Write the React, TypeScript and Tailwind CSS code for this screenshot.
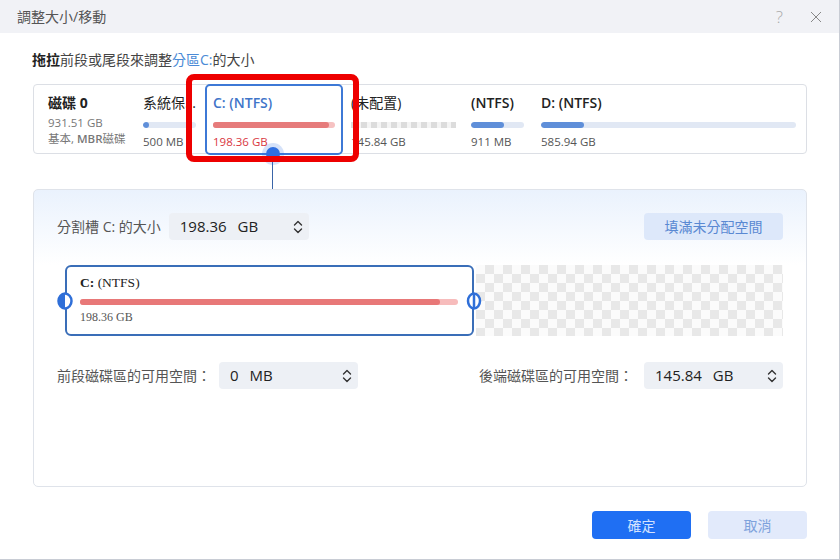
import React from "react"

const ui = "font-['Open_Sans','Noto_Sans_CJK_TC',sans-serif]"

const Chevrons = () => (
  <svg width="10" height="16" viewBox="0 0 10 16" fill="none" stroke="#333" strokeWidth="1.4" strokeLinecap="round" strokeLinejoin="round">
    <path d="M1.5 6 L5 2.5 L8.5 6" />
    <path d="M1.5 10 L5 13.5 L8.5 10" />
  </svg>
)

interface SpinProps {
  value: string
  unit: string
  width: string
}

const SpinBox = ({ value, unit, width }: SpinProps) => (
  <div className={`${width} h-[27px] rounded-[4px] bg-[#edf0f5] flex items-center pl-[11px] pr-[6px] text-[15px] text-[#222]`}>
    <span>{value}</span>
    <span className="ml-[11px]">{unit}</span>
    <span className="ml-auto flex items-center">
      <Chevrons />
    </span>
  </div>
)

interface PartProps {
  name: React.ReactNode
  size: string
  width: string
  fill: string
  bold?: boolean
}

const Part = ({ name, size, width, fill, bold }: PartProps) => (
  <div className={`${width} flex flex-col pt-[9px]`}>
    <div className={`text-[14px] leading-[18px] text-[#222] whitespace-nowrap ${bold ? "font-semibold" : ""}`}>{name}</div>
    <div className="mt-[10px] h-[6px] rounded-full bg-[#e1e8f4] overflow-hidden">
      <div className={`h-full rounded-full bg-[#5f8fd9] ${fill}`} />
    </div>
    <div className="mt-[7px] text-[11.5px] leading-[14px] text-[#555]">{size}</div>
  </div>
)

const LeftHandle = () => (
  <svg width="16" height="18" viewBox="0 0 16 18">
    <ellipse cx="8" cy="9" rx="6.5" ry="7.5" fill="#fff" stroke="#2f6fd8" strokeWidth="2.5" />
    <path d="M8 1.5 A6.5 7.5 0 0 0 8 16.5 Z" fill="#2f6fd8" />
    <path d="M8 5 L12 9 L8 13 Z" fill="#fff" />
  </svg>
)

const RightHandle = () => (
  <svg width="16" height="18" viewBox="0 0 16 18">
    <ellipse cx="8" cy="9" rx="6" ry="7.5" fill="#fff" stroke="#2f6fd8" strokeWidth="2.5" />
    <line x1="8" y1="1" x2="8" y2="17" stroke="#2f6fd8" strokeWidth="2.5" />
  </svg>
)

export default function App() {
  return (
    <div className={`w-[840px] h-[560px] bg-white flex flex-col border-r border-b border-[#c8ccd4] ${ui}`}>
      {/* title bar */}
      <div className="h-[33px] shrink-0 bg-[#f1f2f6] flex items-center pl-[17px] pr-[17px] text-[14px] text-[#555]">
        <span>調整大小/移動</span>
        <span className="ml-auto mr-[27px] text-[17px] text-[#aaa] font-light">?</span>
        <svg width="12" height="12" viewBox="0 0 12 12" stroke="#888" strokeWidth="1">
          <path d="M1 1 L11 11 M11 1 L1 11" />
        </svg>
      </div>

      <div className="pl-[33px] pr-[32px] flex flex-col">
        <div className="mt-[17px] h-[20px] leading-[20px] text-[14px] text-[#444] -ml-px">
          <span className="text-[#222] font-semibold">拖拉</span>前段或尾段來調整<span className="text-[#4a8ad6]">分區C:</span>的大小
        </div>

        {/* disk map */}
        <div className="relative mt-[14px] h-[70px] border border-[#dcdfe5] rounded-[4px] flex items-stretch">
          <div className="w-[109px] pl-[14px] pt-[9px] flex flex-col">
            <div className="text-[14px] leading-[18px] text-[#222] font-semibold">磁碟 <span className="font-bold">0</span></div>
            <div className="mt-[3px] text-[11.5px] leading-[16px] text-[#777]">931.51 GB</div>
            <div className="text-[11.5px] leading-[16px] text-[#777]">基本, <span className="font-semibold">MBR</span>磁碟</div>
          </div>
          <Part name="系統保..." size="500 MB" width="w-[53px]" fill="w-[6px]" />
          <div className="ml-[9px] -mt-px -mb-[2px] w-[138px] border-2 border-[#3d79d6] rounded-[5px] pl-[6px] pr-[6px] pt-[8px] flex flex-col relative">
            <div className="text-[14px] leading-[18px] text-[#3f75c9] font-semibold">C: (NTFS)</div>
            <div className="mt-[10px] h-[6px] rounded-full bg-[#f6c2c2] flex">
              <div className="h-full w-[116px] rounded-full bg-[#e67b7b]" />
            </div>
            <div className="mt-[7px] text-[11.5px] leading-[14px] text-[#d9363e]">198.36 GB</div>
            <div className="absolute left-[59px] -bottom-[8px] w-[14px] h-[14px] rounded-full bg-[#2f6fe0] ring-[4px] ring-[#2f6fe0]/20" />
          </div>
          <div className="ml-[8px] w-[105px] flex flex-col pt-[9px]">
            <div className="text-[14px] leading-[18px] text-[#222] whitespace-nowrap">(未配置)</div>
            <div className="mt-[10px] h-[6px] bg-[image:repeating-linear-gradient(90deg,#dcdcdc_0_6px,#f4f4f4_6px_10px)]" />
            <div className="mt-[7px] text-[11.5px] leading-[14px] text-[#555]">145.84 GB</div>
          </div>
          <div className="ml-[15px] flex">
            <Part name="(NTFS)" size="911 MB" width="w-[53px]" fill="w-[33px]" bold />
          </div>
          <div className="ml-[17px] flex">
            <Part name="D: (NTFS)" size="585.94 GB" width="w-[255px]" fill="w-[43px]" bold />
          </div>

          {/* highlight annotation */}
          <div className="absolute left-[152px] top-[-11px] w-[173px] h-[88px] border-[6px] border-[#ee0000] rounded-[8px] pointer-events-none" />
        </div>

        {/* connector */}
        <div className="h-[35px] pl-[239px]">
          <div className="w-px h-full bg-[#3a65a8]" />
        </div>

        {/* resize panel */}
        <div className="h-[298px] border border-[#dfe3ea] rounded-[5px] bg-[linear-gradient(180deg,#eaf2fd_0px,#ffffff_75px)] px-[23px] flex flex-col">
          <div className="mt-[23px] flex items-center">
            <span className="text-[14px] text-[#555]">分割槽 C: 的大小</span>
            <div className="ml-[8px]">
              <SpinBox value="198.36" unit="GB" width="w-[140px]" />
            </div>
            <div className="ml-auto w-[139px] h-[27px] rounded-[4px] bg-[#dde8fa] text-[14px] text-[#5a89d2] flex items-center justify-center">
              填滿未分配空間
            </div>
          </div>

          <div className="mt-[25px] h-[71px] flex">
            <div className="relative ml-[8px] w-[409px] border-2 border-[#3a6eb8] rounded-[6px] pl-[13px] pr-[14px] pt-[8px] font-['Liberation_Serif','Noto_Sans_CJK_TC',serif]">
              <div className="text-[13.5px] leading-[16px] text-[#222]">
                <span className="font-bold">C:</span> (NTFS)
              </div>
              <div className="mt-[8px] h-[6px] rounded-full bg-[#f7bcbc] flex">
                <div className="h-full w-[360px] rounded-full bg-[#e87878]" />
              </div>
              <div className="mt-[5px] text-[12px] leading-[14px] text-[#555]">198.36 GB</div>
              <div className="absolute left-[-10px] top-[25px]">
                <LeftHandle />
              </div>
              <div className="absolute right-[-10px] top-[25px]">
                <RightHandle />
              </div>
            </div>
            <div className="ml-[2px] flex-1 bg-[image:conic-gradient(#e8e8e8_25%,#fbfbfb_0_50%,#e8e8e8_0_75%,#fbfbfb_0)] bg-size-[18px_18px]" />
          </div>

          <div className="mt-[26px] flex items-center">
            <span className="text-[14px] text-[#555]">前段磁碟區的可用空間：</span>
            <div className="ml-[8px]">
              <SpinBox value="0" unit="MB" width="w-[139px]" />
            </div>
            <span className="ml-auto mr-[11px] text-[14px] text-[#555]">後端磁碟區的可用空間：</span>
            <SpinBox value="145.84" unit="GB" width="w-[139px]" />
          </div>
        </div>

        {/* footer buttons */}
        <div className="mt-[24px] flex justify-end gap-[17px]">
          <div className="w-[99px] h-[28px] rounded-[4px] bg-[#1f6ff3] text-[14px] text-[#d3e2ff] flex items-center justify-center">確定</div>
          <div className="w-[99px] h-[28px] rounded-[4px] bg-[#e2eafb] text-[14px] text-[#7ea2dc] flex items-center justify-center">取消</div>
        </div>
      </div>
    </div>
  )
}
